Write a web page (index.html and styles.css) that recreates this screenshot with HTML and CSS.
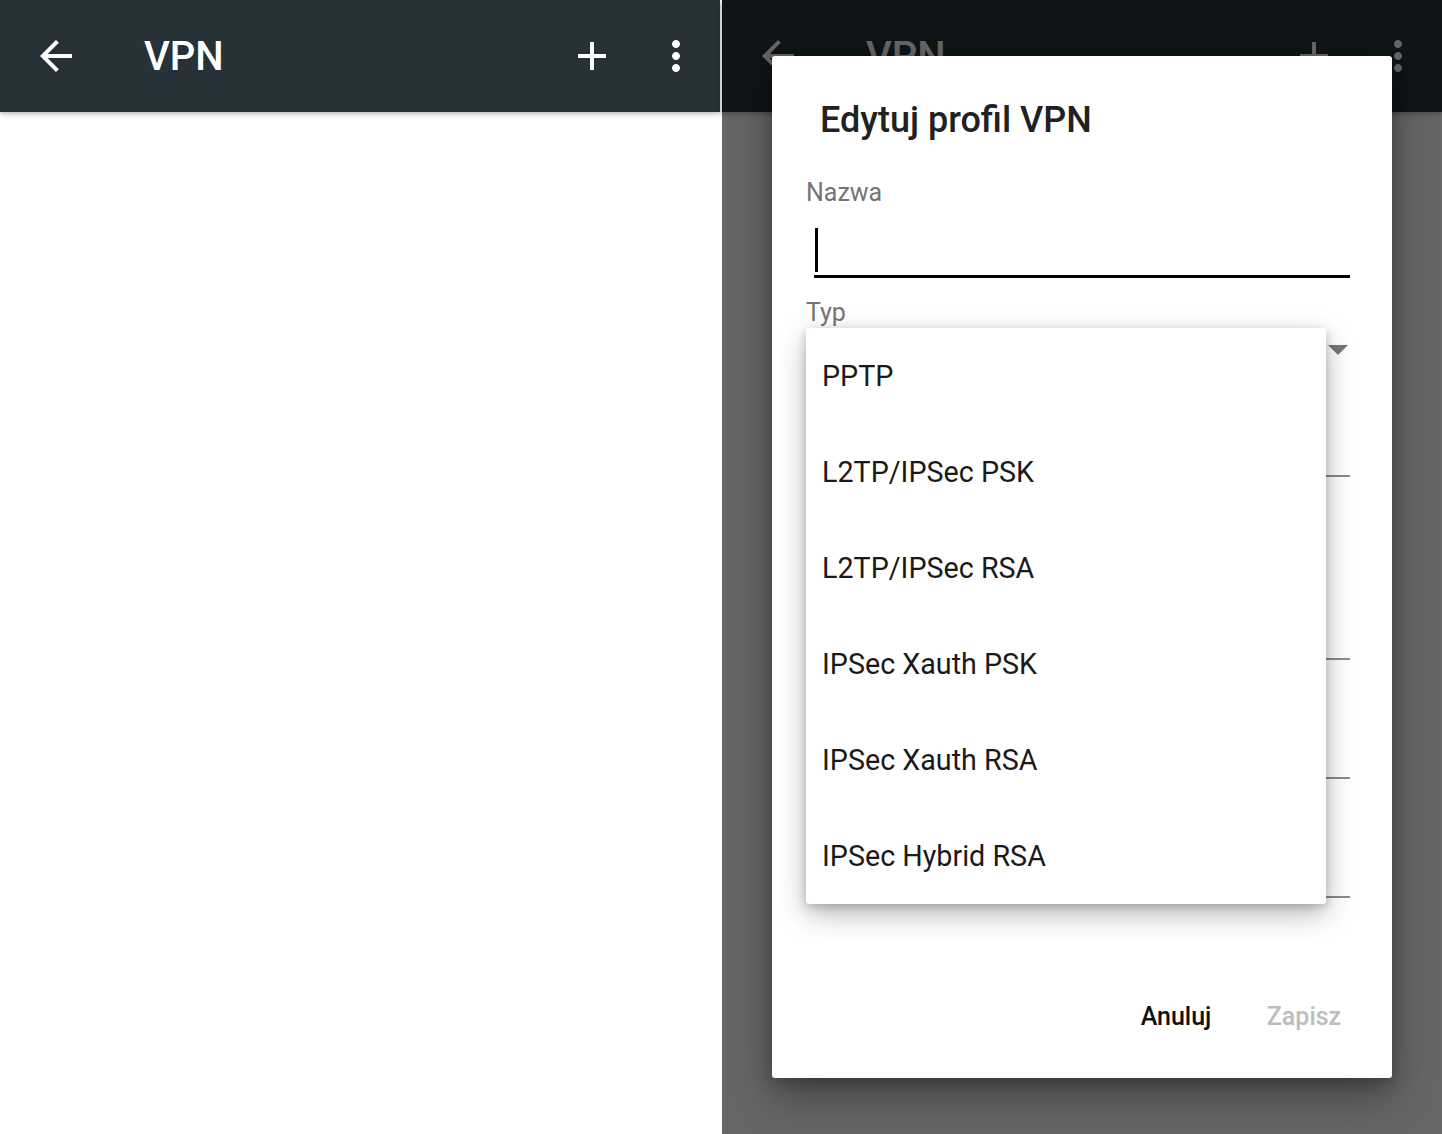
FILE: index.html
```html
<!DOCTYPE html>
<html lang="pl">
<head>
<meta charset="utf-8">
<title>VPN</title>
<link rel="stylesheet" href="styles.css">
</head>
<body>
<div class="screens">
  <section class="screen">
    <header class="toolbar">
      <button class="icon-btn nav-btn" aria-label="Wstecz">
        <svg viewBox="0 0 24 24" width="48" height="48"><path d="M20 11H7.83l5.59-5.59L12 4l-8 8 8 8 1.41-1.41L7.83 13H20v-2z"/></svg>
      </button>
      <h1 class="toolbar-title">VPN</h1>
      <button class="icon-btn add-btn" aria-label="Dodaj">
        <svg viewBox="0 0 24 24" width="48" height="48"><path d="M19 13h-6v6h-2v-6H5v-2h6V5h2v6h6v2z"/></svg>
      </button>
      <button class="icon-btn more-btn" aria-label="Więcej">
        <svg viewBox="0 0 24 24" width="48" height="48"><path d="M12 8c1.1 0 2-.9 2-2s-.9-2-2-2-2 .9-2 2 .9 2 2 2zm0 2c-1.1 0-2 .9-2 2s.9 2 2 2 2-.9 2-2-.9-2-2-2zm0 6c-1.1 0-2 .9-2 2s.9 2 2 2 2-.9 2-2-.9-2-2-2z"/></svg>
      </button>
    </header>
    <main class="content"></main>
  </section>

  <div class="divider"></div>

  <section class="screen">
    <header class="toolbar">
      <button class="icon-btn nav-btn" aria-label="Wstecz">
        <svg viewBox="0 0 24 24" width="48" height="48"><path d="M20 11H7.83l5.59-5.59L12 4l-8 8 8 8 1.41-1.41L7.83 13H20v-2z"/></svg>
      </button>
      <h1 class="toolbar-title">VPN</h1>
      <button class="icon-btn add-btn" aria-label="Dodaj">
        <svg viewBox="0 0 24 24" width="48" height="48"><path d="M19 13h-6v6h-2v-6H5v-2h6V5h2v6h6v2z"/></svg>
      </button>
      <button class="icon-btn more-btn" aria-label="Więcej">
        <svg viewBox="0 0 24 24" width="48" height="48"><path d="M12 8c1.1 0 2-.9 2-2s-.9-2-2-2-2 .9-2 2 .9 2 2 2zm0 2c-1.1 0-2 .9-2 2s.9 2 2 2 2-.9 2-2-.9-2-2-2zm0 6c-1.1 0-2 .9-2 2s.9 2 2 2 2-.9 2-2-.9-2-2-2z"/></svg>
      </button>
    </header>
    <main class="content"></main>

    <div class="scrim"></div>

    <div class="dialog" role="dialog">
      <h2 class="dialog-title">Edytuj profil VPN</h2>
      <div class="dialog-body">
        <label class="field-label">Nazwa</label>
        <div class="text-input focused"><span class="caret"></span></div>

        <label class="field-label label-typ">Typ</label>
        <div class="spinner"><span class="spinner-arrow"></span></div>

        <div class="field-line field-first"></div>
        <div class="field-line"></div>
        <div class="field-line"></div>
      </div>

      <div class="dialog-actions">
        <button class="action-btn action-cancel">Anuluj</button>
        <button class="action-btn action-disabled">Zapisz</button>
      </div>

      <ul class="popup">
        <li class="popup-item">PPTP</li>
        <li class="popup-item">L2TP/IPSec PSK</li>
        <li class="popup-item">L2TP/IPSec RSA</li>
        <li class="popup-item">IPSec Xauth PSK</li>
        <li class="popup-item">IPSec Xauth RSA</li>
        <li class="popup-item">IPSec Hybrid RSA</li>
      </ul>
    </div>
  </section>
</div>
</body>
</html>
```

FILE: styles.css
```css
* {
  box-sizing: border-box;
}

html, body {
  margin: 0;
  padding: 0;
  background: #ffffff;
  font-family: Roboto, "Noto Sans", "Liberation Sans", sans-serif;
}

.screens {
  display: flex;
  width: 1442px;
  height: 1134px;
  overflow: hidden;
}

.screen {
  position: relative;
  width: 720px;
  height: 1134px;
  display: flex;
  flex-direction: column;
  background: #ffffff;
  flex: none;
}

.divider {
  width: 2px;
  flex: none;
  background: #ffffff;
}

.toolbar {
  height: 112px;
  flex: none;
  display: flex;
  align-items: center;
  background: #263238;
  padding-right: 8px;
  box-shadow: 0 2px 5px rgba(0, 0, 0, 0.28);
  position: relative;
  z-index: 1;
}

.icon-btn {
  border: 0;
  padding: 0;
  margin: 0;
  background: transparent;
  height: 112px;
  display: flex;
  align-items: center;
  justify-content: center;
  fill: #ffffff;
}

.nav-btn {
  width: 112px;
}

.toolbar-title {
  margin: 0 0 0 32px;
  color: #ffffff;
  font-size: 40px;
  font-weight: 500;
  letter-spacing: 0;
  flex: 1;
}

.add-btn {
  width: 96px;
}

.more-btn {
  width: 72px;
}

.content {
  flex: 1;
  background: #ffffff;
}

.scrim {
  position: absolute;
  inset: 0;
  background: rgba(0, 0, 0, 0.6);
  z-index: 2;
}

.dialog {
  position: absolute;
  z-index: 3;
  left: 50px;
  top: 56px;
  width: 620px;
  height: 1022px;
  background: #ffffff;
  border-radius: 3px;
  box-shadow: 0 18px 44px rgba(0, 0, 0, 0.35), 0 6px 14px rgba(0, 0, 0, 0.2);
  display: flex;
  flex-direction: column;
}

.dialog-title {
  margin: 0;
  padding: 40px 48px 0;
  font-size: 36px;
  line-height: 48px;
  font-weight: 500;
  color: #212121;
}

.dialog-body {
  flex: 1;
  display: flex;
  flex-direction: column;
  padding: 0 42px 0 34px;
}

.field-label {
  display: block;
  font-size: 25px;
  line-height: 32px;
  color: #757575;
  margin-top: 33px;
}

.label-typ {
  margin-top: 19px;
}

.text-input {
  margin-left: 8px;
  height: 69px;
  border-bottom: 3px solid #000000;
  padding-top: 19px;
}

.caret {
  display: block;
  margin-left: 1px;
  width: 3px;
  height: 44px;
  background: #000000;
}

.spinner {
  margin-left: 8px;
  height: 148px;
  border-bottom: 2px solid #8a8a8a;
  display: flex;
  justify-content: flex-end;
  align-items: flex-start;
  padding-top: 16px;
}

.spinner-arrow {
  width: 0;
  height: 0;
  margin-right: 2px;
  border-left: 10px solid transparent;
  border-right: 10px solid transparent;
  border-top: 10px solid #757575;
}

.field-line {
  margin-left: 8px;
  height: 119px;
  border-bottom: 2px solid #8a8a8a;
}

.field-first {
  height: 183px;
}

.dialog-actions {
  display: flex;
  justify-content: flex-end;
  padding: 0 24px 26px;
}

.action-btn {
  border: 0;
  background: transparent;
  min-width: 128px;
  height: 72px;
  padding: 0 16px;
  font-family: Roboto, "Noto Sans", "Liberation Sans", sans-serif;
  font-size: 25px;
  font-weight: 500;
}

.action-cancel {
  color: #111111;
}

.action-disabled {
  color: #bdbdbd;
}

.popup {
  position: absolute;
  left: 34px;
  top: 272px;
  width: 520px;
  margin: 0;
  padding: 0;
  list-style: none;
  background: #ffffff;
  border-radius: 3px;
  box-shadow: 0 10px 28px rgba(0, 0, 0, 0.28), 0 3px 10px rgba(0, 0, 0, 0.18);
}

.popup-item {
  height: 96px;
  display: flex;
  align-items: center;
  padding-left: 16px;
  font-size: 28.7px;
  color: #1a1a1a;
}
```
